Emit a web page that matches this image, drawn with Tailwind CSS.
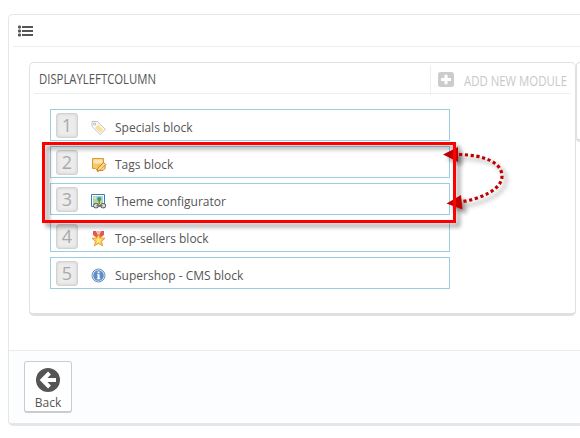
<!DOCTYPE html>
<html lang="en">
<head>
<meta charset="utf-8">
<title>Positions</title>
<script src="https://cdn.jsdelivr.net/npm/@tailwindcss/browser@4"></script>
</head>
<body class="relative h-[438px] w-[580px] overflow-hidden bg-white pl-2 pt-[14px] font-['Open_Sans',sans-serif] text-[12px] text-[#555]">
<main class="flex h-[412px] w-[572px] flex-col rounded-l-[5px] border border-b-[3px] border-r-0 border-[#e6e6e6] bg-white">
  <header class="ml-1 flex h-8 shrink-0 items-center border-b border-[#eee] pl-[5px]">
    <svg width="15" height="12" viewBox="0 0 15 12" fill="#555"><path d="M4 1h11v2H4zM4 5h11v2H4zM4 9h11v2H4z"/><rect y=".4" width="3" height="3" rx="1"/><rect y="4.4" width="3" height="3" rx="1"/><rect y="8.4" width="3" height="3" rx="1"/></svg>
  </header>
  <div class="flex h-[303px] shrink-0 items-start pl-5 pt-[15px]">
    <section class="h-[254px] w-[547px] shrink-0 rounded-[5px] border border-b-[3px] border-[#e0e0e0] bg-white px-1 pt-[2px]">
      <div class="flex h-[29px] items-stretch justify-between border-b border-[#eee]">
        <h2 class="pl-[5px]"><svg width="130" height="28"><text x="0" y="19" font-family="Open Sans, sans-serif" font-size="14.5" fill="#555" textLength="117" lengthAdjust="spacingAndGlyphs">DISPLAYLEFTCOLUMN</text></svg></h2>
        <div class="-mb-[2px] flex w-[141px] border-l border-[#eee] pl-[7px]">
          <svg class="mt-[7px] shrink-0" width="16" height="15" viewBox="0 0 16 15"><rect width="16" height="15" rx="2.5" fill="#ccc"/><path d="M8 2.7v9.6M3 7.5h10" stroke="#fff" stroke-width="3"/></svg>
          <svg class="ml-[10px] shrink-0" width="107" height="29"><text x="0" y="21" font-family="Open Sans, sans-serif" font-size="14.5" fill="#c8c8c8" textLength="103" lengthAdjust="spacingAndGlyphs">ADD NEW MODULE</text></svg>
        </div>
      </div>
      <ul class="ml-4 mt-[15px] flex w-[400px] flex-col gap-[5px]">
        <li class="flex h-8 items-center border border-[#9dcde0] pl-[5px]">
          <span class="flex h-[25px] w-[22px] items-center justify-center rounded-[3px] border border-[#d2d2d2] bg-[#ececec] pt-px text-[18px] text-[#aaa] shadow-[inset_0_0_3px_#c8c8c8]">1</span>
          <svg class="ml-[13px] mt-[6px]" width="16" height="16" viewBox="0 0 16 16"><path d="M1 1.5h5.2l8.3 7.9-5.3 5.1L1 6.4z" fill="#fdfdfb" stroke="#c3c3bf"/><path d="m7.3 4.6 5.2 4.9-3.3 3.2-5.1-5z" fill="#f6e09a"/><path d="m8.2 6.2 3.6 3.4" stroke="#fff2c0"/><circle cx="3.6" cy="4" r="1.1" fill="#fff" stroke="#aaa" stroke-width=".8"/></svg>
          <span class="ml-2 mt-[6px]">Specials block</span>
        </li>
        <li class="flex h-8 items-center border border-[#9dcde0] pl-[5px]">
          <span class="flex h-[25px] w-[22px] items-center justify-center rounded-[3px] border border-[#d2d2d2] bg-[#ececec] pt-px text-[18px] text-[#aaa] shadow-[inset_0_0_3px_#c8c8c8]">2</span>
          <svg class="ml-[13px] mt-[6px]" width="16" height="16" viewBox="0 0 16 16"><path d="M1.5 1.5h11v9H8l-.5 4-3-3h-3z" fill="#f8c66a" stroke="#dc9838"/><path d="M2.5 2.5h9v4h-9z" fill="#ffe6b0"/><path d="m6 14.3 1-3.5 5.7-5.3 2 2-5.5 5.7z" fill="#ffd978" stroke="#b8792d" stroke-width=".9"/><path d="M9 13.5h3l2-2V8" stroke="#cc8430" fill="#fbd181"/></svg>
          <span class="ml-2 mt-[6px]">Tags block</span>
        </li>
        <li class="flex h-8 items-center border border-[#9dcde0] pl-[5px]">
          <span class="flex h-[25px] w-[22px] items-center justify-center rounded-[3px] border border-[#d2d2d2] bg-[#ececec] pt-px text-[18px] text-[#aaa] shadow-[inset_0_0_3px_#c8c8c8]">3</span>
          <svg class="ml-[13px] mt-[6px]" width="16" height="16" viewBox="0 0 16 16"><path d="M.5 .5h13v12H.5z" fill="#fff" stroke="#397fb6"/><path d="M2 2h10v5H2z" fill="#9ad2f5"/><path d="M2 7h10v4H2z" fill="#b5d88c"/><circle cx="4" cy="4" r="1.2" fill="#ffe55c"/><circle cx="8.2" cy="5" r="2.1" fill="#4e9c49"/><path d="M8.2 6v4" stroke="#76613a"/><rect x="2.6" y="9.6" width="4.8" height="4.2" rx="1.6" fill="#ddd" stroke="#555"/><rect x="9.8" y="9.6" width="4.8" height="4.2" rx="1.6" fill="#ddd" stroke="#555"/><path d="M5.5 11.7h6" stroke="#777" stroke-width="1.5"/></svg>
          <span class="ml-2 mt-[6px]">Theme configurator</span>
        </li>
        <li class="flex h-8 items-center border border-[#9dcde0] pl-[5px]">
          <span class="flex h-[25px] w-[22px] items-center justify-center rounded-[3px] border border-[#d2d2d2] bg-[#ececec] pt-px text-[18px] text-[#aaa] shadow-[inset_0_0_3px_#c8c8c8]">4</span>
          <svg class="ml-[13px] mt-[6px]" width="16" height="16" viewBox="0 0 16 16"><path d="M2 0h3l2.5 5L10 0h3v4L9 7H6L2 4z" fill="#e65557"/><path d="M5 0h5L7.5 4z" fill="#f7b5b1"/><path d="m7.5 3 1.8 3.9 4.7.4-3.5 3.1 1.2 4.4-4.2-2.3-4.2 2.3 1.2-4.4L1 7.3l4.7-.4z" fill="#ffcb48" stroke="#e29a37" stroke-width=".9"/><path d="m7.5 6 .8 2.3h2.5L9 10v1.6L7.5 11l-1.8.9.5-2L4.5 8.3h2z" fill="#ffe98a"/></svg>
          <span class="ml-2 mt-[6px]">Top-sellers block</span>
        </li>
        <li class="flex h-8 items-center border border-[#9dcde0] pl-[5px]">
          <span class="flex h-[25px] w-[22px] items-center justify-center rounded-[3px] border border-[#d2d2d2] bg-[#ececec] pt-px text-[18px] text-[#aaa] shadow-[inset_0_0_3px_#c8c8c8]">5</span>
          <svg class="ml-[13px] mt-[6px]" width="16" height="16" viewBox="0 0 16 16"><circle cx="7.5" cy="7.5" r="6.5" fill="#dce8f4" stroke="#6d93b8"/><circle cx="7.5" cy="7.5" r="5.2" fill="#5b8dc8"/><path d="M6.6 3.5h2v1.7h-2zM6 6.3h2.6v4h.8v1H5.8v-1h.8v-3H6z" fill="#fff"/></svg>
          <span class="ml-2 mt-[6px]">Supershop - CMS block</span>
        </li>
      </ul>
    </section>
    <section class="h-[80px] w-1 shrink-0 rounded-l-[5px] border border-b-[3px] border-r-0 border-[#e0e0e0] bg-white"></section>
  </div>
  <footer class="flex-1 rounded-bl-[4px] border-t border-[#ebebeb] bg-[#fcfdfe] pl-[15px] pt-[10px]">
    <button class="flex h-[52px] w-12 flex-col items-center rounded-[3px] border border-b-2 border-[#ccc] bg-white pt-[6px]">
      <svg class="shrink-0" width="24" height="24" viewBox="0 0 24 24"><circle cx="12" cy="12" r="12" fill="#555"/><path d="M20 12H7M13.5 5 6.5 12l7 7" stroke="#fff" stroke-width="4" fill="none"/></svg>
      <span class="mt-[2px] leading-[18px]">Back</span>
    </button>
  </footer>
</main>
<svg class="pointer-events-none absolute left-0 top-0" width="580" height="438" viewBox="0 0 580 438">
  <defs><filter id="shade" x="-20%" y="-20%" width="150%" height="150%"><feDropShadow dx="4" dy="4" stdDeviation="2" flood-color="#000" flood-opacity=".4"/></filter></defs>
  <rect x="43.5" y="143.5" width="411" height="78" fill="none" stroke="#f00" stroke-width="3" filter="url(#shade)"/>
  <g filter="url(#shade)"><path d="M459 154.5C485 155 502 163 502 176C502 190 480 199 460 202" fill="none" stroke="#c00000" stroke-width="3.2" stroke-dasharray="3.2 2.6"/><path d="m443 154.5 15-7.5v15zM446.5 203.5 461 195l1.5 14.5z" fill="#c00000"/></g>
  <path d="M454.5 142v81" stroke="#f00" stroke-width="3"/>
</svg>
</body>
</html>
